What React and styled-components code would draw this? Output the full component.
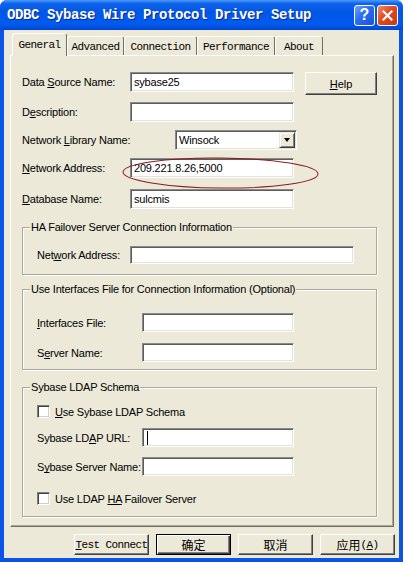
import React from "react";
import styled, { createGlobalStyle } from "styled-components";

const GlobalStyle = createGlobalStyle`
  html, body {
    margin: 0;
    padding: 0;
    background: #fff;
  }
  body {
    font-family: "Liberation Sans", Arial, sans-serif;
    color: #000;
  }
`;

const Window = styled.div`
  width: 403px;
  height: 562px;
  box-sizing: border-box;
  display: flex;
  flex-direction: column;
  padding: 0 4px 4px;
  background: #0b55e6;
  border-radius: 7px 7px 0 0;
  overflow: hidden;
`;

const TitleBar = styled.div`
  height: 30px;
  flex: none;
  margin: 0 -4px;
  display: flex;
  align-items: center;
  padding: 0 5px 0 7px;
  background: linear-gradient(
    180deg,
    #4a9bff 0%,
    #0f63ea 12%,
    #0057e6 40%,
    #005bef 80%,
    #0046d0 100%
  );
`;

const Title = styled.div`
  flex: 1;
  white-space: nowrap;
  color: #fff;
  font-family: "Liberation Mono", "Courier New", monospace;
  font-weight: bold;
  font-size: 14px;
  letter-spacing: -0.4px;
  text-shadow: 1px 1px 0 #0c2a8f;
`;

const CaptionButton = styled.div`
  width: 21px;
  height: 21px;
  box-sizing: border-box;
  margin-left: 2px;
  border: 1px solid #fff;
  border-radius: 3px;
  display: flex;
  align-items: center;
  justify-content: center;
  color: #fff;
  font-family: "Liberation Sans", Arial, sans-serif;
  font-weight: bold;
  font-size: 16px;
  background: ${(p) =>
    p.$close
      ? "linear-gradient(135deg, #f08a6a 0%, #e0491f 45%, #c73a12 100%)"
      : "linear-gradient(135deg, #6ea4ff 0%, #2a6cf0 45%, #1a52d8 100%)"};
`;

const Body = styled.div`
  flex: 1;
  display: flex;
  flex-direction: column;
  background: #ece9d8;
  padding: 3px 4px 0 6px;
`;

const TabRow = styled.div`
  position: relative;
  z-index: 1;
  height: 22px;
  display: flex;
  align-items: flex-end;
  padding-left: 2px;
`;

const Tab = styled.div`
  width: ${(p) => p.$w}px;
  height: ${(p) => (p.$active ? 23 : 19)}px;
  margin-bottom: ${(p) => (p.$active ? -1 : 0)}px;
  box-sizing: border-box;
  border: 1px solid;
  border-bottom: none;
  border-color: #fff #716f64 transparent #fff;
  border-radius: 3px 3px 0 0;
  background: #ece9d8;
  display: flex;
  align-items: center;
  justify-content: center;
  padding-top: ${(p) => (p.$active ? 0 : 1)}px;
  font-family: "Liberation Mono", "Courier New", monospace;
  font-size: 11px;
  letter-spacing: -0.6px;
  white-space: nowrap;
`;

const Panel = styled.div`
  position: relative;
  width: 384px;
  height: 472px;
  box-sizing: border-box;
  border: 1px solid;
  border-color: #fff #716f64 #716f64 #fff;
  box-shadow: inset -1px -1px 0 #aca899;
  padding: 16px 0 0 11px;
  display: flex;
  flex-direction: column;
`;

const Row = styled.div`
  display: flex;
  align-items: center;
  margin-top: ${(p) => p.$mt || 0}px;
`;

const Label = styled.div`
  width: ${(p) => p.$w}px;
  flex: none;
  font-size: 11px;
  letter-spacing: -0.2px;
  white-space: nowrap;
`;

const U = styled.span`
  text-decoration: underline;
  text-decoration-skip-ink: none;
  text-underline-offset: 1px;
`;

const Field = styled.div`
  width: ${(p) => p.$w}px;
  height: ${(p) => p.$h || 20}px;
  flex: none;
  box-sizing: border-box;
  background: #fff;
  border: 1px solid;
  border-color: #8a8a8a #fff #fff #8a8a8a;
  box-shadow: inset 1px 1px 0 #5c5c5c, inset -1px -1px 0 #e4e2d8;
  display: flex;
  align-items: center;
  padding-left: 3px;
  font-size: 11px;
  letter-spacing: -0.2px;
`;

const Caret = styled.span`
  width: 1px;
  height: 14px;
  margin-left: 1px;
  background: #000;
`;

const Combo = styled(Field)`
  padding: 1px;
  padding-left: 3px;
`;

const ComboText = styled.span`
  flex: 1;
`;

const DropButton = styled.div`
  width: 16px;
  height: 16px;
  box-sizing: border-box;
  border: 1px solid;
  border-color: #ece9d8 #404040 #404040 #ece9d8;
  box-shadow: inset 1px 1px 0 #fff, inset -1px -1px 0 #808080;
  background: #ece9d8;
  display: flex;
  align-items: center;
  justify-content: center;

  &::after {
    content: "";
    border-left: 3.5px solid transparent;
    border-right: 3.5px solid transparent;
    border-top: 4px solid #000;
  }
`;

const Button = styled.div`
  width: ${(p) => p.$w || 75}px;
  height: ${(p) => p.$h || 21}px;
  flex: none;
  box-sizing: border-box;
  background: #ece9d8;
  border: 1px solid;
  border-color: ${(p) =>
    p.$default ? "#000" : "#fff #404040 #404040 #fff"};
  box-shadow: ${(p) =>
    p.$default
      ? "inset 1px 1px 0 #fff, inset -1px -1px 0 #404040, inset -2px -2px 0 #808080"
      : "inset -1px -1px 0 #808080"};
  display: flex;
  align-items: center;
  justify-content: center;
  font-size: 11px;
  white-space: nowrap;
`;

const HelpButton = styled(Button)`
  margin-left: 11px;
  margin-bottom: -3px;
  align-self: flex-start;
`;

const Mono = styled.span`
  font-family: "Liberation Mono", "Courier New", monospace;
  font-size: 11px;
  letter-spacing: -0.6px;
`;

const Cjk = styled.span`
  font-family: "Noto Sans CJK SC", sans-serif;
  font-size: 12px;
`;

const Group = styled.div`
  position: relative;
  margin: ${(p) => p.$mt}px 16px 0 0;
  border: 1px solid #aca899;
  box-shadow: inset 1px 1px 0 #fff, 1px 1px 0 #fff;
  padding: ${(p) => p.$pt}px 0 ${(p) => p.$pb}px 14px;
  display: flex;
  flex-direction: column;
`;

const Legend = styled.div`
  position: absolute;
  top: -8px;
  left: 7px;
  padding: 0 1px;
  background: #ece9d8;
  font-size: 11px;
  letter-spacing: -0.2px;
  line-height: 14px;
  white-space: nowrap;
`;

const CheckBox = styled.div`
  width: 13px;
  height: 13px;
  box-sizing: border-box;
  background: #fff;
  border: 1px solid;
  border-color: #808080 #fff #fff #808080;
  box-shadow: inset 1px 1px 0 #404040, inset -1px -1px 0 #d4d0c8;
`;

const CheckText = styled.span`
  margin-left: 5px;
  font-size: 11px;
  letter-spacing: -0.2px;
  white-space: nowrap;
`;

const Highlight = styled.svg`
  position: absolute;
  left: 110px;
  top: 100px;
  overflow: visible;
  pointer-events: none;
`;

const BtnRow = styled.div`
  display: flex;
  justify-content: flex-end;
  gap: 7px;
  margin-top: 7px;
`;

const tabs = [
  { name: "General", w: 55, active: true },
  { name: "Advanced", w: 57 },
  { name: "Connection", w: 73 },
  { name: "Performance", w: 78 },
  { name: "About", w: 48 },
];

export default function App() {
  return (
    <>
      <GlobalStyle />
      <Window>
        <TitleBar>
          <Title>ODBC Sybase Wire Protocol Driver Setup</Title>
          <CaptionButton>?</CaptionButton>
          <CaptionButton $close>
            <svg width="11" height="11" viewBox="0 0 11 11">
              <path
                d="M1.5 1.5 L9.5 9.5 M9.5 1.5 L1.5 9.5"
                stroke="#fff"
                strokeWidth="2.2"
                strokeLinecap="square"
              />
            </svg>
          </CaptionButton>
        </TitleBar>
        <Body>
          <TabRow>
            {tabs.map((t) => (
              <Tab key={t.name} $w={t.w} $active={t.active}>
                {t.name}
              </Tab>
            ))}
          </TabRow>
          <Panel>
            <Row>
              <Label $w={108}>
                Data <U>S</U>ource Name:
              </Label>
              <Field $w={164}>sybase25</Field>
              <HelpButton $w={72} $h={23}>
                <U>H</U>elp
              </HelpButton>
            </Row>
            <Row $mt={10}>
              <Label $w={108}>
                D<U>e</U>scription:
              </Label>
              <Field $w={164} />
            </Row>
            <Row $mt={8}>
              <Label $w={153}>
                Network <U>L</U>ibrary Name:
              </Label>
              <Combo $w={122}>
                <ComboText>Winsock</ComboText>
                <DropButton />
              </Combo>
            </Row>
            <Row $mt={8}>
              <Label $w={108}>
                <U>N</U>etwork Address:
              </Label>
              <Field $w={164}>209.221.8.26,5000</Field>
            </Row>
            <Row $mt={11}>
              <Label $w={108}>
                <U>D</U>atabase Name:
              </Label>
              <Field $w={164}>sulcmis</Field>
            </Row>

            <Group $mt={18} $pt={18} $pb={10}>
              <Legend>HA Failover Server Connection Information</Legend>
              <Row>
                <Label $w={93}>
                  Net<U>w</U>ork Address:
                </Label>
                <Field $w={224} $h={18} />
              </Row>
            </Group>

            <Group $mt={14} $pt={23} $pb={7}>
              <Legend>
                Use Interfaces File for Connection Information (Optional)
              </Legend>
              <Row>
                <Label $w={105}>
                  <U>I</U>nterfaces File:
                </Label>
                <Field $w={152} $h={19} />
              </Row>
              <Row $mt={11}>
                <Label $w={105}>
                  S<U>e</U>rver Name:
                </Label>
                <Field $w={152} $h={19} />
              </Row>
            </Group>

            <Group $mt={17} $pt={17} $pb={11}>
              <Legend>Sybase LDAP Schema</Legend>
              <Row>
                <CheckBox />
                <CheckText>
                  <U>U</U>se Sybase LDAP Schema
                </CheckText>
              </Row>
              <Row $mt={10}>
                <Label $w={105}>
                  Sybase LD<U>A</U>P URL:
                </Label>
                <Field $w={152} $h={19}>
                  <Caret />
                </Field>
              </Row>
              <Row $mt={10}>
                <Label $w={105}>
                  S<U>y</U>base Server Name:
                </Label>
                <Field $w={152} $h={19} />
              </Row>
              <Row $mt={16}>
                <CheckBox />
                <CheckText>
                  Use LDAP <U>HA</U> Failover Server
                </CheckText>
              </Row>
            </Group>

            <Highlight width="200" height="34" viewBox="0 0 200 34">
              <ellipse
                cx="99.5"
                cy="17"
                rx="97.5"
                ry="15"
                fill="none"
                stroke="#8b1c24"
                strokeWidth="1"
                transform="rotate(0.6 99.5 17)"
              />
            </Highlight>
          </Panel>
          <BtnRow>
            <Button>
              <Mono>
                <U>T</U>est Connect
              </Mono>
            </Button>
            <Button $default>
              <Cjk>确定</Cjk>
            </Button>
            <Button>
              <Cjk>取消</Cjk>
            </Button>
            <Button>
              <Cjk>应用</Cjk>
              <Mono>
                (<U>A</U>)
              </Mono>
            </Button>
          </BtnRow>
        </Body>
      </Window>
    </>
  );
}
